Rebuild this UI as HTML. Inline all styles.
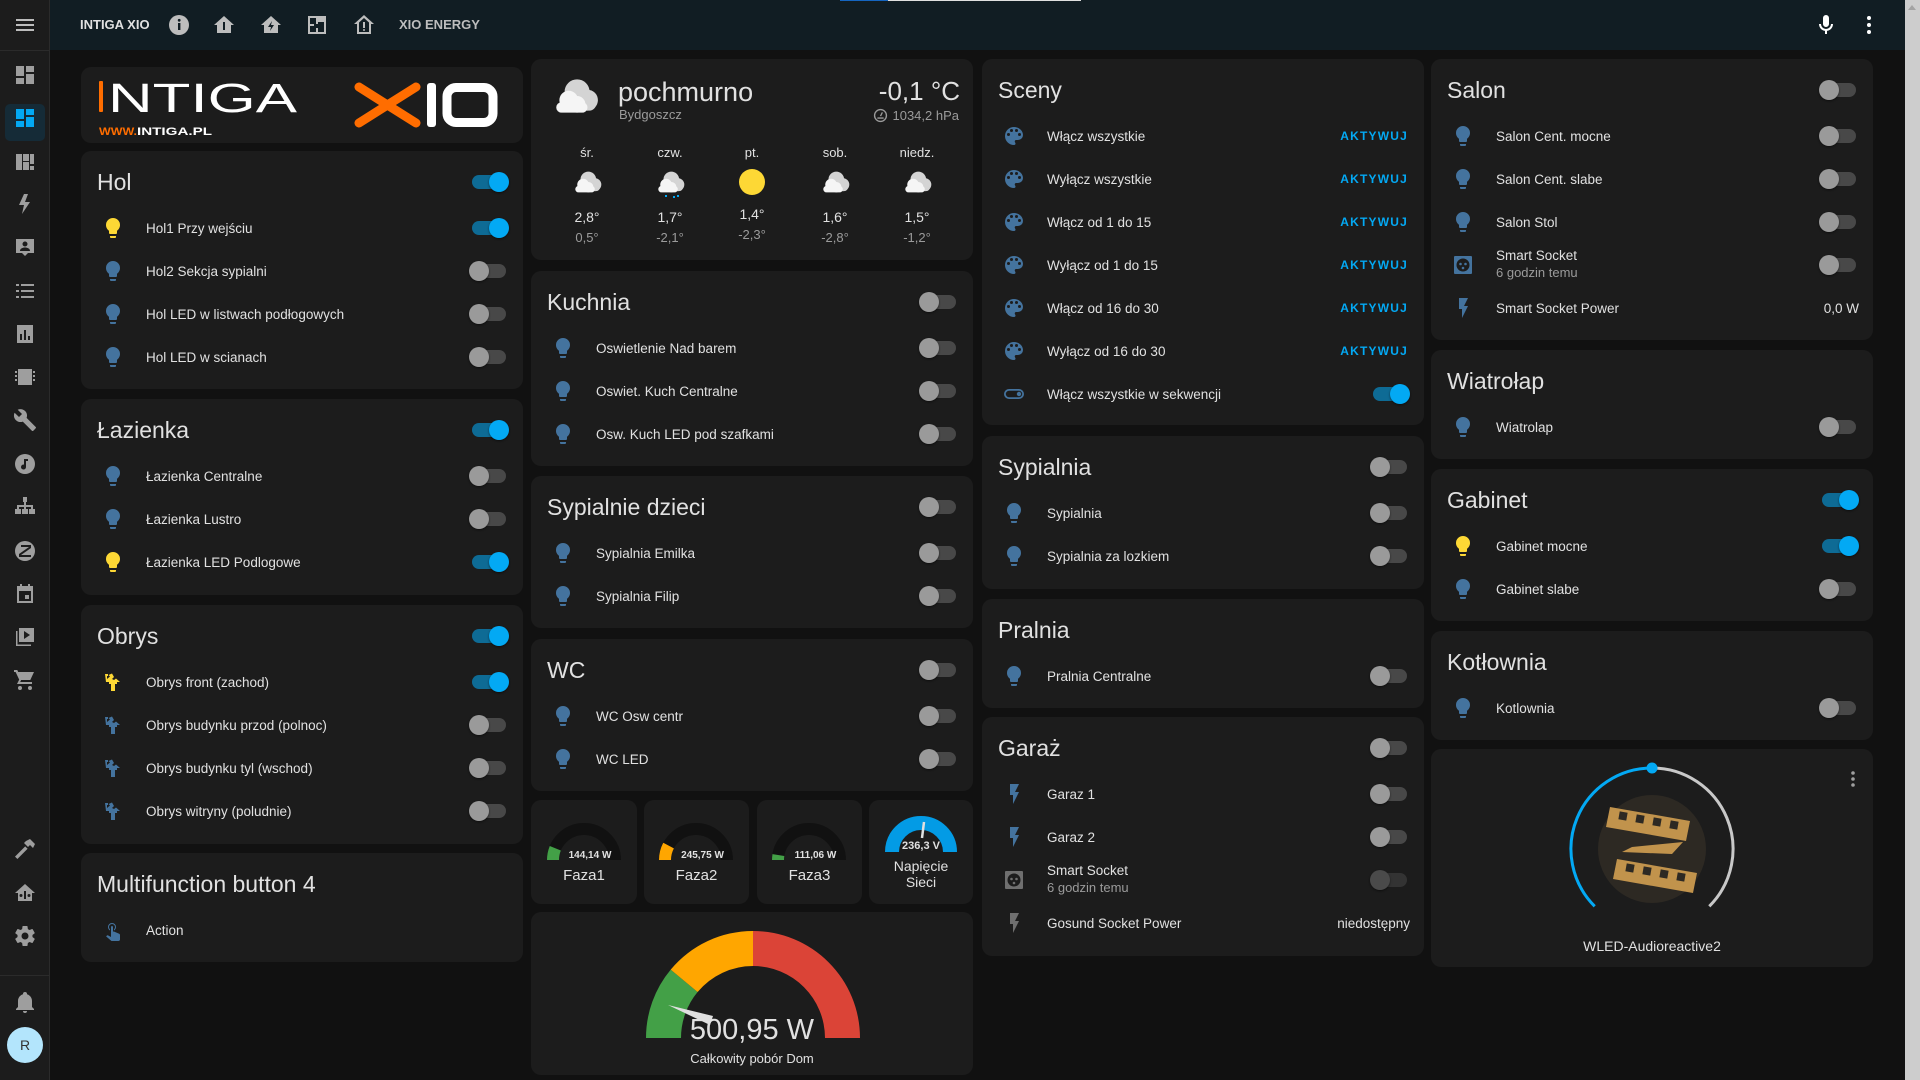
<!DOCTYPE html>
<html><head><meta charset="utf-8"><style>
*{box-sizing:border-box;margin:0;padding:0}
body{width:1920px;height:1080px;overflow:hidden;background:#111111;font-family:"Liberation Sans",sans-serif;color:#e1e1e1;position:relative}
.hdr{position:absolute;left:50px;top:0;width:1855px;height:50px;background:#111d23}
.side{position:absolute;left:0;top:0;width:50px;height:1080px;background:#1c1c1c;border-right:1px solid #2b2b2b}
.sb{position:absolute;right:0;top:0;width:15px;height:1080px;background:#cdcdcd}
.si{position:absolute;left:13px;width:24px;height:24px;fill:#9e9e9e}
.card{position:absolute;background:#1c1c1c;border-radius:10px;width:442px}
.t{height:56px;line-height:62px;padding-left:16px;font-size:23px;position:relative;color:#e1e1e1}
.r{height:43px;position:relative}
.ic{position:absolute;left:20px;top:9px;width:24px;height:24px;fill:#44739e}
.on .ic{fill:#fdd835}
.n{position:absolute;left:65px;top:0;line-height:43px;font-size:13.5px;color:#e1e1e1}
.n2{position:absolute;left:65px;top:3px;font-size:13.5px;line-height:17px}
.n2 span{display:block;color:#9b9b9b;font-size:13px}
.tg{position:absolute;right:17px;top:14px;width:34px;height:14px;border-radius:7px;background:#484848}
.tg:after{content:"";position:absolute;left:-3px;top:-3px;width:20px;height:20px;border-radius:50%;background:#9a9a9a;box-shadow:0 1px 2px rgba(0,0,0,.5)}
.tg.o{background:#0e6b95}
.tg.o:after{left:17px;background:#03a9f4}
.tg.d{background:#333}.tg.d:after{background:#4a4a4a}
.t .tg{top:24px}
.ak{position:absolute;right:16px;top:0;line-height:43px;font-size:12px;font-weight:bold;color:#03a9f4;letter-spacing:1.2px}
.val{position:absolute;right:14px;top:0;line-height:43px;font-size:13.5px}
.hi{position:absolute;width:24px;height:24px;top:13px;fill:#bdbdbd}
</style></head><body>
<svg width="0" height="0" style="position:absolute">
<defs>
<symbol id="bulb" viewBox="0 0 24 24"><path d="M12,2A7,7 0 0,0 5,9C5,11.38 6.19,13.47 8,14.74V17A1,1 0 0,0 9,18H15A1,1 0 0,0 16,17V14.74C17.81,13.47 19,11.38 19,9A7,7 0 0,0 12,2M9,21A1,1 0 0,0 10,22H14A1,1 0 0,0 15,21V20H9V21Z"/></symbol>
<symbol id="pal" viewBox="0 0 24 24"><path d="M17.5,12A1.5,1.5 0 0,1 16,10.5A1.5,1.5 0 0,1 17.5,9A1.5,1.5 0 0,1 19,10.5A1.5,1.5 0 0,1 17.5,12M14.5,8A1.5,1.5 0 0,1 13,6.5A1.5,1.5 0 0,1 14.5,5A1.5,1.5 0 0,1 16,6.5A1.5,1.5 0 0,1 14.5,8M9.5,8A1.5,1.5 0 0,1 8,6.5A1.5,1.5 0 0,1 9.5,5A1.5,1.5 0 0,1 11,6.5A1.5,1.5 0 0,1 9.5,8M6.5,12A1.5,1.5 0 0,1 5,10.5A1.5,1.5 0 0,1 6.5,9A1.5,1.5 0 0,1 8,10.5A1.5,1.5 0 0,1 6.5,12M12,3A9,9 0 0,0 3,12A9,9 0 0,0 12,21A1.5,1.5 0 0,0 13.5,19.5C13.5,19.11 13.35,18.76 13.11,18.5C12.88,18.23 12.73,17.88 12.73,17.5A1.5,1.5 0 0,1 14.230,16H16A5,5 0 0,0 21,11C21,6.58 16.97,3 12,3Z"/></symbol>
<symbol id="bolt" viewBox="0 0 24 24"><path d="M8,2V13H11V22L17,10H13L17,2H8Z"/></symbol>
<symbol id="sock" viewBox="0 0 24 24"><path d="M4,3H20A1,1 0 0 1 21,4V20A1,1 0 0 1 20,21H4A1,1 0 0 1 3,20V4A1,1 0 0 1 4,3ZM12,5.5A6.5,6.5 0 1 0 12,18.5A6.5,6.5 0 1 0 12,5.5Z"/><circle cx="9.5" cy="11" r="1.3"/><circle cx="14.5" cy="11" r="1.3"/><circle cx="12" cy="15" r="1.3"/></symbol>
<symbol id="obr" viewBox="0 0 24 24"><path d="M4,4H7V6H6V9L9,6.5L7.5,5L11,3.5L13,7L11,9L13,10L15,8.5L19,12H16V14H14V17H10V14H8V12H5Z"/><rect x="10" y="17" width="4" height="4"/></symbol>
<symbol id="tgi" viewBox="0 0 24 24"><path d="M7,7A5,5 0 0 0 7,17H17A5,5 0 0 0 17,7ZM7,8.8H17A3.2,3.2 0 0 1 17,15.2H7A3.2,3.2 0 0 1 7,8.8Z"/><circle cx="17" cy="12" r="2.2"/></symbol>
<symbol id="tch" viewBox="0 0 24 24"><path d="M10,9A1,1 0 0 1 11,8A1,1 0 0 1 12,9V13.47L13.21,13.6L18.15,15.79C18.68,16.03 19,16.56 19,17.14V21.5C18.97,22.32 18.32,22.97 17.5,23H11C10.62,23 10.26,22.85 10,22.57L5.1,18.37L5.84,17.6C6.030,17.39 6.3,17.28 6.58,17.28H6.8L10,19V9M11,5A4,4 0 0 1 15,9C15,10.5 14.2,11.77 13,12.46V11.24C13.61,10.69 14,9.89 14,9A3,3 0 0 0 11,6A3,3 0 0 0 8,9C8,9.89 8.39,10.69 9,11.24V12.46C7.8,11.77 7,10.5 7,9A4,4 0 0 1 11,5Z"/></symbol>
<symbol id="cloud" viewBox="0 0 48 40"><circle cx="26" cy="16" r="12" fill="#d4d4d4"/><circle cx="36" cy="24" r="10" fill="#d4d4d4"/><rect x="10" y="22" width="34" height="12" rx="6" fill="#d4d4d4"/><circle cx="18" cy="24" r="9" fill="#f5f5f5"/><circle cx="26" cy="28" r="8" fill="#f5f5f5"/><rect x="6" y="26" width="30" height="10" rx="5" fill="#f5f5f5"/></symbol>
</defs></svg>

<div class="side"></div>
<div class="hdr"></div>
<div style="position:absolute;left:0;top:50px;width:50px;height:1px;background:#2b2b2b"></div>
<div style="position:absolute;left:840px;top:0;width:48px;height:1px;background:#1565c0"></div>
<div style="position:absolute;left:888px;top:0;width:193px;height:1px;background:#e0e0e0"></div>
<div class="sb"><div style="position:absolute;left:3px;top:5px;width:0;height:0;border-left:4px solid transparent;border-right:4px solid transparent;border-bottom:5px solid #a3a3a3"></div></div>

<svg style="position:absolute;left:13px;top:13px" width="24" height="24" viewBox="0 0 24 24" fill="#bdbdbd"><rect x="3" y="6" width="18" height="2"/><rect x="3" y="11" width="18" height="2"/><rect x="3" y="16" width="18" height="2"/></svg>
<div style="position:absolute;left:80px;top:0;line-height:50px;font-size:13px;font-weight:bold;color:#e1e1e1">INTIGA XIO</div>
<svg class="hi" style="left:167px" viewBox="0 0 24 24"><circle cx="12" cy="12" r="10"/><rect x="11" y="10" width="2.4" height="7" fill="#111d23"/><circle cx="12.2" cy="7.3" r="1.4" fill="#111d23"/></svg>
<svg class="hi" style="left:212px" viewBox="0 0 24 24"><path d="M12,3L2,12H5V20H19V12H22Z"/><rect x="11" y="9" width="2" height="8" fill="#111d23"/></svg>
<svg class="hi" style="left:259px" viewBox="0 0 24 24"><path d="M12,3L2,12H5V20H19V12H22Z"/><path d="M13,8L9,14H12L11,18L15,12H12Z" fill="#111d23"/></svg>
<svg class="hi" style="left:305px" viewBox="0 0 24 24"><path d="M3,3H21V21H3ZM5,5V11H9V13H5V19H11V15H13V19H19V9H13V11H11V5Z" fill-rule="evenodd"/></svg>
<svg class="hi" style="left:352px" viewBox="0 0 24 24"><path d="M12,2L2,11H5V21H19V11H22ZM12,5L17,9.5V19H7V9.5Z" fill-rule="evenodd"/><rect x="11" y="9" width="2" height="6"/><circle cx="12" cy="17" r="1"/></svg>
<div style="position:absolute;left:399px;top:0;line-height:50px;font-size:13px;font-weight:bold;color:#bdbdbd">XIO ENERGY</div>
<svg class="hi" style="left:1814px;fill:#fff" viewBox="0 0 24 24"><path d="M12,2A3,3 0 0 1 15,5V11A3,3 0 0 1 9,11V5A3,3 0 0 1 12,2M19,11C19,14.53 16.39,17.44 13,17.93V21H11V17.93C7.61,17.44 5,14.53 5,11H7A5,5 0 0 0 12,16A5,5 0 0 0 17,11Z"/></svg>
<svg class="hi" style="left:1857px;fill:#fff" viewBox="0 0 24 24"><circle cx="12" cy="5" r="2"/><circle cx="12" cy="12" r="2"/><circle cx="12" cy="19" r="2"/></svg>

<div style="position:absolute;left:5px;top:104px;width:40px;height:37px;border-radius:5px;background:#152b37"></div>
<svg class="si" style="top:63px" viewBox="0 0 24 24"><path d="M3,3H11V13H3ZM13,3H21V9H13ZM13,11H21V21H13ZM3,15H11V21H3Z"/></svg>
<svg class="si" style="top:106px;fill:#03a9f4" viewBox="0 0 24 24"><path d="M3,3H11V13H3ZM13,3H21V9H13ZM13,11H21V21H13ZM3,15H11V21H3Z"/></svg>
<svg class="si" style="top:150px" viewBox="0 0 24 24"><path d="M3,4H9V20H3ZM10,4H16V11H10ZM17,4H21V14H17ZM10,12H16V20H10ZM17,16H21V20H17Z"/></svg>
<svg class="si" style="top:192px" viewBox="0 0 24 24"><path d="M11,2L6,13H11L9,22L17,10H12L15,2Z"/></svg>
<svg class="si" style="top:235px" viewBox="0 0 24 24"><path d="M3,4H21V18H15L12,21L9,18H3ZM12,6.5A2.5,2.5 0 1 0 12,11.5A2.5,2.5 0 1 0 12,6.5ZM7,16H17C17,13.5 14.5,12.5 12,12.5C9.5,12.5 7,13.5 7,16Z" fill-rule="evenodd"/></svg>
<svg class="si" style="top:279px" viewBox="0 0 24 24"><path d="M8,5H21V7H8ZM8,11H21V13H8ZM8,17H21V19H8ZM3,5H6V7H3ZM3,11H6V13H3ZM3,17H6V19H3Z"/></svg>
<svg class="si" style="top:322px" viewBox="0 0 24 24"><path d="M4,3H20V21H4ZM7,12V18H9V12ZM11,8V18H13V8ZM15,14V18H17V14Z" fill-rule="evenodd"/></svg>
<svg class="si" style="top:365px" viewBox="0 0 24 24"><path d="M5,4H19V20H5ZM2,6H4V8H2ZM2,10H4V12H2ZM2,14H4V16H2ZM20,6H22V8H20ZM20,10H22V12H20ZM20,14H22V16H20Z"/></svg>
<svg class="si" style="top:408px" viewBox="0 0 24 24"><path d="M22.7,19L13.6,9.9C14.5,7.6 14,4.9 12.1,3C10.1,1 7.1,0.6 4.7,1.7L9,6L6,9L1.6,4.7C0.4,7.1 0.9,10.1 2.9,12.1C4.8,14 7.5,14.5 9.8,13.6L18.9,22.7C19.3,23.1 19.9,23.1 20.3,22.7L22.6,20.4C23.1,20 23.1,19.3 22.7,19Z"/></svg>
<svg class="si" style="top:452px" viewBox="0 0 24 24"><path d="M12,2A10,10 0 1 0 12,22A10,10 0 1 0 12,2ZM11,7H15V9H13V15A2.5,2.5 0 1 1 11,12.6Z" fill-rule="evenodd"/></svg>
<svg class="si" style="top:495px" viewBox="0 0 24 24"><path d="M10,2H14V7H13V10H20V14H22V19H16V14H18V12H13V14H15V19H9V14H11V12H6V14H8V19H2V14H4V10H11V7H10Z"/></svg>
<svg class="si" style="top:539px" viewBox="0 0 24 24"><path d="M12,2A10,10 0 1 0 12,22A10,10 0 1 0 12,2ZM6,15L16,8H8V6H18V9L8,16H18V18H6Z" fill-rule="evenodd"/></svg>
<svg class="si" style="top:582px" viewBox="0 0 24 24"><path d="M4,4H7V2H9V4H15V2H17V4H20V21H4ZM6,9V19H18V9ZM12,13H16V17H12Z" fill-rule="evenodd"/></svg>
<svg class="si" style="top:625px" viewBox="0 0 24 24"><path d="M6,3H21V17H6ZM11,6V14L17,10ZM3,6H4.5V19.5H18V21H3Z" fill-rule="evenodd"/></svg>
<svg class="si" style="top:668px" viewBox="0 0 24 24"><path d="M1,2H4.3L5.2,4H21L17.3,12H8.1L7.2,14H19V16H4L6.2,11.6L2.6,4H1ZM7,18A2,2 0 1 1 7,22A2,2 0 1 1 7,18ZM17,18A2,2 0 1 1 17,22A2,2 0 1 1 17,18Z"/></svg>
<svg class="si" style="top:837px" viewBox="0 0 24 24"><path d="M2,19.6L12.2,9.4L14.6,11.8L4.4,22ZM13,4L17,2L22,7L20,11L17,8L15,10L11,6Z"/></svg>
<svg class="si" style="top:881px" viewBox="0 0 24 24"><path d="M12,3L2,12H5V20H19V12H22ZM8,13A1.5,1.5 0 1 1 8,16A1.5,1.5 0 1 1 8,13ZM16,13A1.5,1.5 0 1 1 16,16A1.5,1.5 0 1 1 16,13ZM11,10H13V18H11Z" fill-rule="evenodd"/></svg>
<svg class="si" style="top:924px" viewBox="0 0 24 24"><path d="M12,15.5A3.5,3.5 0 0,1 8.5,12A3.5,3.5 0 0,1 12,8.5A3.5,3.5 0 0,1 15.5,12A3.5,3.5 0 0,1 12,15.5M19.43,12.97C19.47,12.65 19.5,12.33 19.5,12C19.5,11.67 19.47,11.34 19.43,11L21.54,9.37C21.73,9.22 21.78,8.95 21.66,8.73L19.66,5.27C19.54,5.05 19.27,4.96 19.05,5.05L16.56,6.05C16.04,5.66 15.5,5.32 14.87,5.07L14.5,2.42C14.46,2.18 14.25,2 14,2H10C9.75,2 9.54,2.18 9.5,2.42L9.13,5.07C8.5,5.32 7.96,5.66 7.44,6.05L4.95,5.05C4.73,4.96 4.46,5.05 4.34,5.27L2.34,8.73C2.21,8.95 2.27,9.22 2.46,9.37L4.57,11C4.53,11.34 4.5,11.67 4.5,12C4.5,12.33 4.53,12.65 4.57,12.97L2.46,14.63C2.27,14.78 2.21,15.05 2.34,15.27L4.34,18.73C4.46,18.95 4.73,19.03 4.95,18.95L7.44,17.94C7.96,18.34 8.5,18.68 9.13,18.93L9.5,21.58C9.54,21.82 9.75,22 10,22H14C14.25,22 14.46,21.82 14.5,21.58L14.87,18.93C15.5,18.67 16.04,18.34 16.56,17.94L19.05,18.95C19.27,19.03 19.54,18.95 19.66,18.73L21.66,15.27C21.78,15.05 21.73,14.78 21.54,14.63L19.43,12.97Z"/></svg>
<div style="position:absolute;left:0;top:975px;width:50px;height:1px;background:#2b2b2b"></div>
<svg class="si" style="top:990px" viewBox="0 0 24 24"><path d="M21,19V20H3V19L5,17V11C5,7.9 7,5.2 10,4.3V4A2,2 0 0 1 14,4V4.3C17,5.2 19,7.9 19,11V17ZM14,21A2,2 0 0 1 10,21"/></svg>
<div style="position:absolute;left:7px;top:1027px;width:36px;height:36px;border-radius:50%;background:#b3e5fc;color:#333;font-size:14px;line-height:36px;text-align:center">R</div>

<!-- COLUMN 1 -->
<div class="card" style="left:81px;top:67px;height:76px">
<svg width="442" height="76" style="position:absolute;left:0;top:0">
<rect x="18" y="14" width="4" height="31" rx="1" fill="#ff6d00"/>
<text x="27" y="45" font-family="Liberation Sans" font-size="41" fill="#fff" textLength="189" lengthAdjust="spacingAndGlyphs">NTIGA</text>
<text x="18" y="68" font-family="Liberation Sans" font-size="11" font-weight="bold" fill="#ff6d00" textLength="38" lengthAdjust="spacingAndGlyphs">WWW.</text>
<text x="56" y="68" font-family="Liberation Sans" font-size="11" font-weight="bold" fill="#fff" textLength="75" lengthAdjust="spacingAndGlyphs">INTIGA.PL</text>
<path d="M278,20L335,56M335,20L278,56" stroke="#ff6d00" stroke-width="9" stroke-linecap="round"/>
<rect x="346" y="16" width="9" height="44" rx="3" fill="#fff"/>
<rect x="366" y="20.5" width="46" height="35" rx="9" fill="none" stroke="#fff" stroke-width="9"/>
</svg></div>

<div class="card" style="left:81px;top:151px;height:238px">
<div class="t">Hol<div class="tg o"></div></div>
<div class="r on"><svg class="ic"><use href="#bulb"/></svg><div class="n">Hol1 Przy wejściu</div><div class="tg o"></div></div>
<div class="r"><svg class="ic"><use href="#bulb"/></svg><div class="n">Hol2 Sekcja sypialni</div><div class="tg"></div></div>
<div class="r"><svg class="ic"><use href="#bulb"/></svg><div class="n">Hol LED w listwach podłogowych</div><div class="tg"></div></div>
<div class="r"><svg class="ic"><use href="#bulb"/></svg><div class="n">Hol LED w scianach</div><div class="tg"></div></div>
</div>

<div class="card" style="left:81px;top:399px;height:196px">
<div class="t">Łazienka<div class="tg o"></div></div>
<div class="r"><svg class="ic"><use href="#bulb"/></svg><div class="n">Łazienka Centralne</div><div class="tg"></div></div>
<div class="r"><svg class="ic"><use href="#bulb"/></svg><div class="n">Łazienka Lustro</div><div class="tg"></div></div>
<div class="r on"><svg class="ic"><use href="#bulb"/></svg><div class="n">Łazienka LED Podlogowe</div><div class="tg o"></div></div>
</div>

<div class="card" style="left:81px;top:605px;height:239px">
<div class="t">Obrys<div class="tg o"></div></div>
<div class="r on"><svg class="ic"><use href="#obr"/></svg><div class="n">Obrys front (zachod)</div><div class="tg o"></div></div>
<div class="r"><svg class="ic"><use href="#obr"/></svg><div class="n">Obrys budynku przod (polnoc)</div><div class="tg"></div></div>
<div class="r"><svg class="ic"><use href="#obr"/></svg><div class="n">Obrys budynku tyl (wschod)</div><div class="tg"></div></div>
<div class="r"><svg class="ic"><use href="#obr"/></svg><div class="n">Obrys witryny (poludnie)</div><div class="tg"></div></div>
</div>

<div class="card" style="left:81px;top:853px;height:109px">
<div class="t">Multifunction button 4</div>
<div class="r"><svg class="ic"><use href="#tch"/></svg><div class="n">Action</div></div>
</div>

<!-- COLUMN 2 -->
<div class="card" style="left:531px;top:59px;height:201px">
<svg style="position:absolute;left:19px;top:16px" width="50" height="42"><use href="#cloud" width="50" height="42"/></svg>
<div style="position:absolute;left:87px;top:18px;font-size:27px;color:#e1e1e1">pochmurno</div>
<div style="position:absolute;left:88px;top:48px;font-size:13px;color:#9b9b9b">Bydgoszcz</div>
<div style="position:absolute;right:13px;top:17px;font-size:26px;color:#e1e1e1">-0,1 °C</div>
<div style="position:absolute;right:14px;top:49px;font-size:13px;color:#9b9b9b"><svg width="15" height="15" viewBox="0 0 24 24" style="vertical-align:-3px;margin-right:4px" fill="none" stroke="#9b9b9b" stroke-width="2.2"><circle cx="12" cy="12" r="9.5"/><path d="M12,13L15,7M7,16H17"/></svg>1034,2 hPa</div>
<div style="position:absolute;left:0;top:86px;width:442px;height:110px;font-size:13px">
<div style="position:absolute;left:26px;width:60px;text-align:center">
 <div>śr.</div><svg width="32" height="26" style="margin-top:9px"><use href="#cloud" width="32" height="26"/></svg><div style="font-size:14px;margin-top:11px">2,8°</div><div style="color:#9b9b9b;margin-top:5px">0,5°</div></div>
<div style="position:absolute;left:109px;width:60px;text-align:center">
 <div>czw.</div><svg width="32" height="26" style="margin-top:9px"><use href="#cloud" width="32" height="26"/></svg><div style="font-size:14px;margin-top:11px">1,7°</div><div style="color:#9b9b9b;margin-top:5px">-2,1°</div>
 <div style="position:absolute;left:25px;top:50px;width:2px;height:2px;background:#03a9f4;box-shadow:8px 1px #03a9f4,12px 0 #03a9f4"></div></div>
<div style="position:absolute;left:191px;width:60px;text-align:center">
 <div>pt.</div><div style="width:26px;height:26px;border-radius:50%;background:#fdd835;margin:9px auto 0"></div><div style="font-size:14px;margin-top:11px">1,4°</div><div style="color:#9b9b9b;margin-top:5px">-2,3°</div></div>
<div style="position:absolute;left:274px;width:60px;text-align:center">
 <div>sob.</div><svg width="32" height="26" style="margin-top:9px"><use href="#cloud" width="32" height="26"/></svg><div style="font-size:14px;margin-top:11px">1,6°</div><div style="color:#9b9b9b;margin-top:5px">-2,8°</div></div>
<div style="position:absolute;left:356px;width:60px;text-align:center">
 <div>niedz.</div><svg width="32" height="26" style="margin-top:9px"><use href="#cloud" width="32" height="26"/></svg><div style="font-size:14px;margin-top:11px">1,5°</div><div style="color:#9b9b9b;margin-top:5px">-1,2°</div></div>
</div></div>

<div class="card" style="left:531px;top:271px;height:195px">
<div class="t">Kuchnia<div class="tg"></div></div>
<div class="r"><svg class="ic"><use href="#bulb"/></svg><div class="n">Oswietlenie Nad barem</div><div class="tg"></div></div>
<div class="r"><svg class="ic"><use href="#bulb"/></svg><div class="n">Oswiet. Kuch Centralne</div><div class="tg"></div></div>
<div class="r"><svg class="ic"><use href="#bulb"/></svg><div class="n">Osw. Kuch LED pod szafkami</div><div class="tg"></div></div>
</div>

<div class="card" style="left:531px;top:476px;height:152px">
<div class="t">Sypialnie dzieci<div class="tg"></div></div>
<div class="r"><svg class="ic"><use href="#bulb"/></svg><div class="n">Sypialnia Emilka</div><div class="tg"></div></div>
<div class="r"><svg class="ic"><use href="#bulb"/></svg><div class="n">Sypialnia Filip</div><div class="tg"></div></div>
</div>

<div class="card" style="left:531px;top:639px;height:152px">
<div class="t">WC<div class="tg"></div></div>
<div class="r"><svg class="ic"><use href="#bulb"/></svg><div class="n">WC Osw centr</div><div class="tg"></div></div>
<div class="r"><svg class="ic"><use href="#bulb"/></svg><div class="n">WC LED</div><div class="tg"></div></div>
</div>

<div class="card" style="left:531px;top:800px;width:106px;height:104px">
<svg width="106" height="104" style="position:absolute;left:0;top:0"><path d="M22,60A31,31 0 0 1 84,60" fill="none" stroke="#111" stroke-width="12"/><path d="M22,60A31,31 0 0 1 84,60" fill="none" stroke="#43a047" stroke-width="12" stroke-dasharray="12 200"/></svg>
<div style="position:absolute;left:0;width:106px;top:50px;text-align:center;font-size:10px;font-weight:bold;padding-left:12px">144,14 W</div>
<div style="position:absolute;left:0;width:106px;top:67px;text-align:center;font-size:15px">Faza1</div></div>
<div class="card" style="left:644px;top:800px;width:105px;height:104px">
<svg width="105" height="104" style="position:absolute;left:0;top:0"><path d="M21,60A31,31 0 0 1 83,60" fill="none" stroke="#111" stroke-width="12"/><path d="M21,60A31,31 0 0 1 83,60" fill="none" stroke="#ffa600" stroke-width="12" stroke-dasharray="15 200"/></svg>
<div style="position:absolute;left:0;width:105px;top:50px;text-align:center;font-size:10px;font-weight:bold;padding-left:12px">245,75 W</div>
<div style="position:absolute;left:0;width:105px;top:67px;text-align:center;font-size:15px">Faza2</div></div>
<div class="card" style="left:757px;top:800px;width:105px;height:104px">
<svg width="105" height="104" style="position:absolute;left:0;top:0"><path d="M21,60A31,31 0 0 1 83,60" fill="none" stroke="#111" stroke-width="12"/><path d="M21,60A31,31 0 0 1 83,60" fill="none" stroke="#43a047" stroke-width="12" stroke-dasharray="5 200"/></svg>
<div style="position:absolute;left:0;width:105px;top:50px;text-align:center;font-size:10px;font-weight:bold;padding-left:12px">111,06 W</div>
<div style="position:absolute;left:0;width:105px;top:67px;text-align:center;font-size:15px">Faza3</div></div>
<div class="card" style="left:869px;top:800px;width:104px;height:104px">
<svg width="104" height="104" style="position:absolute;left:0;top:0"><path d="M23,52A29,29 0 0 1 81,52" fill="none" stroke="#039be5" stroke-width="14"/><path d="M55,22L53,38" stroke="#e0e0e0" stroke-width="2.5"/></svg>
<div style="position:absolute;left:0;width:104px;top:40px;text-align:center;font-size:11px;font-weight:bold">236,3 V</div>
<div style="position:absolute;left:0;width:104px;top:58px;text-align:center;font-size:14px;line-height:16px">Napięcie<br>Sieci</div></div>

<div class="card" style="left:531px;top:912px;height:163px">
<svg width="442" height="163" style="position:absolute;left:0;top:0">
<g transform="translate(222,126)">
<path d="M-107,0A107,107 0 0 1 -82.3,-68.4L-55.4,-46A72,72 0 0 0 -72,0Z" fill="#43a047"/>
<path d="M-82.3,-68.4A107,107 0 0 1 0,-107L0,-72A72,72 0 0 0 -55.4,-46Z" fill="#ffa600"/>
<path d="M0,-107A107,107 0 0 1 107,0L72,0A72,72 0 0 0 0,-72Z" fill="#db4437"/>
<path d="M-85,-33L-40,-22L-43,-13Z" fill="#e0e0e0"/>
</g></svg>
<div style="position:absolute;left:0;width:442px;top:102px;text-align:center;font-size:29px">500,95 W</div>
<div style="position:absolute;left:0;width:442px;top:139px;text-align:center;font-size:13px">Całkowity pobór Dom</div>
</div>

<!-- COLUMN 3 -->
<div class="card" style="left:982px;top:59px;height:366px">
<div class="t">Sceny</div>
<div class="r"><svg class="ic"><use href="#pal"/></svg><div class="n">Włącz wszystkie</div><div class="ak">AKTYWUJ</div></div>
<div class="r"><svg class="ic"><use href="#pal"/></svg><div class="n">Wyłącz wszystkie</div><div class="ak">AKTYWUJ</div></div>
<div class="r"><svg class="ic"><use href="#pal"/></svg><div class="n">Włącz od 1 do 15</div><div class="ak">AKTYWUJ</div></div>
<div class="r"><svg class="ic"><use href="#pal"/></svg><div class="n">Wyłącz od 1 do 15</div><div class="ak">AKTYWUJ</div></div>
<div class="r"><svg class="ic"><use href="#pal"/></svg><div class="n">Włącz od 16 do 30</div><div class="ak">AKTYWUJ</div></div>
<div class="r"><svg class="ic"><use href="#pal"/></svg><div class="n">Wyłącz od 16 do 30</div><div class="ak">AKTYWUJ</div></div>
<div class="r"><svg class="ic"><use href="#tgi"/></svg><div class="n">Włącz wszystkie w sekwencji</div><div class="tg o"></div></div>
</div>

<div class="card" style="left:982px;top:436px;height:153px">
<div class="t">Sypialnia<div class="tg"></div></div>
<div class="r"><svg class="ic"><use href="#bulb"/></svg><div class="n">Sypialnia</div><div class="tg"></div></div>
<div class="r"><svg class="ic"><use href="#bulb"/></svg><div class="n">Sypialnia za lozkiem</div><div class="tg"></div></div>
</div>

<div class="card" style="left:982px;top:599px;height:109px">
<div class="t">Pralnia</div>
<div class="r"><svg class="ic"><use href="#bulb"/></svg><div class="n">Pralnia Centralne</div><div class="tg"></div></div>
</div>

<div class="card" style="left:982px;top:717px;height:239px">
<div class="t">Garaż<div class="tg"></div></div>
<div class="r"><svg class="ic"><use href="#bolt"/></svg><div class="n">Garaz 1</div><div class="tg"></div></div>
<div class="r"><svg class="ic"><use href="#bolt"/></svg><div class="n">Garaz 2</div><div class="tg"></div></div>
<div class="r"><svg class="ic" style="fill:#6f6f6f"><use href="#sock"/></svg><div class="n2">Smart Socket<span>6 godzin temu</span></div><div class="tg d"></div></div>
<div class="r"><svg class="ic" style="fill:#6f6f6f"><use href="#bolt"/></svg><div class="n">Gosund Socket Power</div><div class="val">niedostępny</div></div>
</div>

<!-- COLUMN 4 -->
<div class="card" style="left:1431px;top:59px;height:281px">
<div class="t">Salon<div class="tg"></div></div>
<div class="r"><svg class="ic"><use href="#bulb"/></svg><div class="n">Salon Cent. mocne</div><div class="tg"></div></div>
<div class="r"><svg class="ic"><use href="#bulb"/></svg><div class="n">Salon Cent. slabe</div><div class="tg"></div></div>
<div class="r"><svg class="ic"><use href="#bulb"/></svg><div class="n">Salon Stol</div><div class="tg"></div></div>
<div class="r"><svg class="ic"><use href="#sock"/></svg><div class="n2">Smart Socket<span>6 godzin temu</span></div><div class="tg"></div></div>
<div class="r"><svg class="ic"><use href="#bolt"/></svg><div class="n">Smart Socket Power</div><div class="val">0,0 W</div></div>
</div>

<div class="card" style="left:1431px;top:350px;height:109px">
<div class="t">Wiatrołap</div>
<div class="r"><svg class="ic"><use href="#bulb"/></svg><div class="n">Wiatrolap</div><div class="tg"></div></div>
</div>

<div class="card" style="left:1431px;top:469px;height:152px">
<div class="t">Gabinet<div class="tg o"></div></div>
<div class="r on"><svg class="ic"><use href="#bulb"/></svg><div class="n">Gabinet mocne</div><div class="tg o"></div></div>
<div class="r"><svg class="ic"><use href="#bulb"/></svg><div class="n">Gabinet slabe</div><div class="tg"></div></div>
</div>

<div class="card" style="left:1431px;top:631px;height:109px">
<div class="t">Kotłownia</div>
<div class="r"><svg class="ic"><use href="#bulb"/></svg><div class="n">Kotlownia</div><div class="tg"></div></div>
</div>

<div class="card" style="left:1431px;top:749px;height:218px">
<svg width="442" height="218" style="position:absolute;left:0;top:0">
<g transform="translate(221,100)">
<path d="M-57.3,57.3A81,81 0 0 1 0,-81" fill="none" stroke="#03a9f4" stroke-width="3"/>
<path d="M0,-81A81,81 0 0 1 57.3,57.3" fill="none" stroke="#c8c8c8" stroke-width="3"/>
<circle cx="0" cy="-81" r="5.5" fill="#03a9f4"/>
<circle cx="0" cy="0" r="54" fill="#2d2923"/>
<g fill="#c1934c">
<path d="M-42,-42L38,-28L34,-8L-46,-22Z"/>
<path d="M-25,0L26,-5L15,7L-35,5Z" transform="translate(5,-2)"/>
<path d="M-35,10L45,24L41,44L-39,30Z"/>
</g>
<g fill="#2d2923">
<rect x="-33" y="-37" width="8" height="8" transform="rotate(10 -29 -33)"/><rect x="-16" y="-34" width="8" height="8" transform="rotate(10 -12 -30)"/><rect x="1" y="-31" width="8" height="8" transform="rotate(10 5 -27)"/><rect x="18" y="-28" width="8" height="8" transform="rotate(10 22 -24)"/>
<rect x="-26" y="15" width="8" height="8" transform="rotate(10 -22 19)"/><rect x="-9" y="18" width="8" height="8" transform="rotate(10 -5 22)"/><rect x="8" y="21" width="8" height="8" transform="rotate(10 12 25)"/><rect x="25" y="24" width="8" height="8" transform="rotate(10 29 28)"/>
</g></g>
<circle cx="422" cy="24" r="1.8" fill="#9e9e9e"/><circle cx="422" cy="30" r="1.8" fill="#9e9e9e"/><circle cx="422" cy="36" r="1.8" fill="#9e9e9e"/>
</svg>
<div style="position:absolute;left:0;width:442px;top:189px;text-align:center;font-size:14px">WLED-Audioreactive2</div>
</div>
</body></html>
